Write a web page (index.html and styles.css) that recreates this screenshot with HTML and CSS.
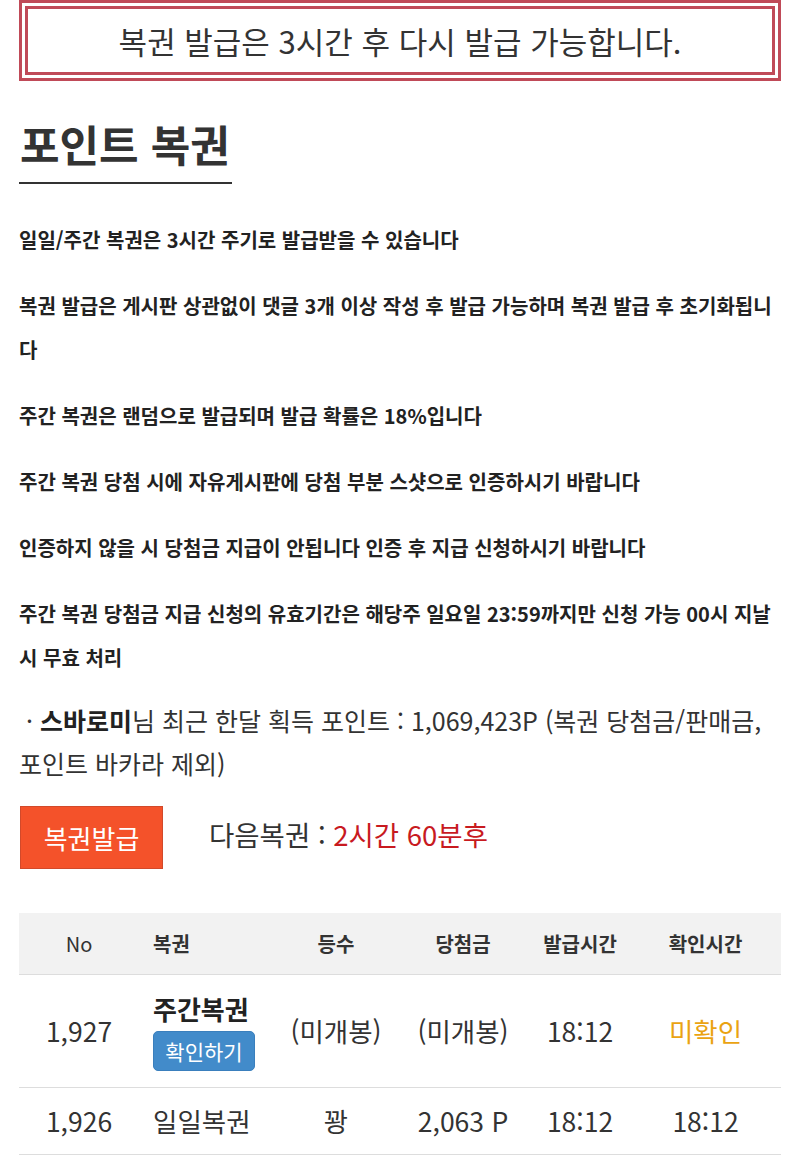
FILE: index.html
```html
<!DOCTYPE html>
<html lang="ko">
<head>
<meta charset="utf-8">
<title>포인트 복권</title>
<link rel="stylesheet" href="styles.css">
</head>
<body>
<div class="page">
  <div class="notice">복권 발급은 3시간 후 다시 발급 가능합니다.</div>

  <h1 class="title">포인트 복권</h1>

  <div class="rules">
    <p>일일/주간 복권은 3시간 주기로 발급받을 수 있습니다</p>
    <p>복권 발급은 게시판 상관없이 댓글 3개 이상 작성 후 발급 가능하며 복권 발급 후 초기화됩니다</p>
    <p>주간 복권은 랜덤으로 발급되며 발급 확률은 18%입니다</p>
    <p>주간 복권 당첨 시에 자유게시판에 당첨 부분 스샷으로 인증하시기 바랍니다</p>
    <p>인증하지 않을 시 당첨금 지급이 안됩니다 인증 후 지급 신청하시기 바랍니다</p>
    <p>주간 복권 당첨금 지급 신청의 유효기간은 해당주 일요일 23:59까지만 신청 가능 00시 지날시 무효 처리</p>
  </div>

  <div class="points">&nbsp;·&nbsp;<b>스바로미</b>님 최근 한달 획득 포인트 : 1,069,423P (복권 당첨금/판매금, 포인트 바카라 제외)</div>

  <div class="issue">
    <button class="issue-btn" type="button">복권발급</button>
    <div class="next">다음복권 : <span class="next-time">2시간 60분후</span></div>
  </div>

  <table class="list">
    <colgroup>
      <col class="c-no">
      <col class="c-name">
      <col class="c-rank">
      <col class="c-prize">
      <col class="c-issued">
      <col class="c-checked">
    </colgroup>
    <thead>
      <tr>
        <th class="no">No</th>
        <th class="name">복권</th>
        <th>등수</th>
        <th>당첨금</th>
        <th>발급시간</th>
        <th>확인시간</th>
      </tr>
    </thead>
    <tbody>
      <tr>
        <td>1,927</td>
        <td class="name">
          <div class="weekly">주간복권</div>
          <button class="check-btn" type="button">확인하기</button>
        </td>
        <td>(미개봉)</td>
        <td>(미개봉)</td>
        <td>18:12</td>
        <td class="unchecked">미확인</td>
      </tr>
      <tr>
        <td>1,926</td>
        <td class="name">일일복권</td>
        <td>꽝</td>
        <td>2,063 P</td>
        <td>18:12</td>
        <td>18:12</td>
      </tr>
    </tbody>
  </table>
</div>
</body>
</html>
```

FILE: styles.css
```css
html, body {
  margin: 0;
  padding: 0;
  background: #ffffff;
}

body {
  font-family: "Noto Sans CJK KR", "Noto Sans", sans-serif;
  color: #333333;
}

.page {
  padding: 0 19px;
}

.notice {
  border: 9px double #c04a58;
  height: 63px;
  line-height: 63px;
  text-align: center;
  font-size: 31px;
  color: #333333;
  white-space: nowrap;
}

.title {
  display: inline-block;
  margin: 38px 0 0 0;
  padding: 0 2px 15px 1px;
  font-size: 43px;
  line-height: 48px;
  font-weight: 700;
  color: #333333;
  border-bottom: 2px solid #333333;
}

.rules {
  margin-top: 34px;
}

.rules p {
  margin: 0 0 22px 0;
  font-size: 20px;
  line-height: 44px;
  font-weight: 700;
  color: #222222;
}

.rules p:last-child {
  margin-bottom: 0;
}

.points {
  margin-top: 19px;
  font-size: 25px;
  line-height: 43px;
  color: #333333;
  word-break: keep-all;
}

.points b {
  font-weight: 700;
  color: #222222;
}

.issue {
  display: flex;
  align-items: center;
  gap: 46px;
  margin-top: 21px;
}

.issue-btn {
  width: 143px;
  height: 63px;
  margin-left: 1px;
  border: 1px solid #d2492a;
  background: #f4522a;
  color: #ffffff;
  font-family: inherit;
  font-size: 26px;
  padding: 0;
}

.next {
  font-size: 27.5px;
  color: #333333;
  margin-top: -8px;
}

.next-time {
  color: #c81a1f;
}

.list {
  margin-top: 44px;
  width: 762px;
  border-collapse: collapse;
  table-layout: fixed;
}

.c-no { width: 120px; }
.c-name { width: 137px; }
.c-rank { width: 120px; }
.c-prize { width: 134px; }
.c-issued { width: 100px; }
.c-checked { width: 151px; }

.list th {
  height: 61px;
  padding: 0;
  background: #f2f2f2;
  border-bottom: 1px solid #dddddd;
  font-size: 20px;
  font-weight: 700;
  color: #333333;
  text-align: center;
}

.list th.no {
  font-weight: 400;
}

.list th.name,
.list td.name {
  text-align: left;
  padding-left: 14px;
}

.list td {
  padding: 16px 0;
  font-size: 26.5px;
  line-height: 34px;
  text-align: center;
  color: #333333;
  border-bottom: 1px solid #dddddd;
  vertical-align: middle;
  white-space: nowrap;
}

.weekly {
  font-size: 26px;
  font-weight: 700;
  line-height: 36px;
  color: #222222;
}

.check-btn {
  display: block;
  margin-top: 4px;
  width: 102px;
  height: 40px;
  padding: 0;
  border: 1px solid #3a7fbd;
  border-radius: 5px;
  background: #428bca;
  color: #ffffff;
  font-family: inherit;
  font-size: 21px;
}

.unchecked {
  color: #eaa312 !important;
}
```
